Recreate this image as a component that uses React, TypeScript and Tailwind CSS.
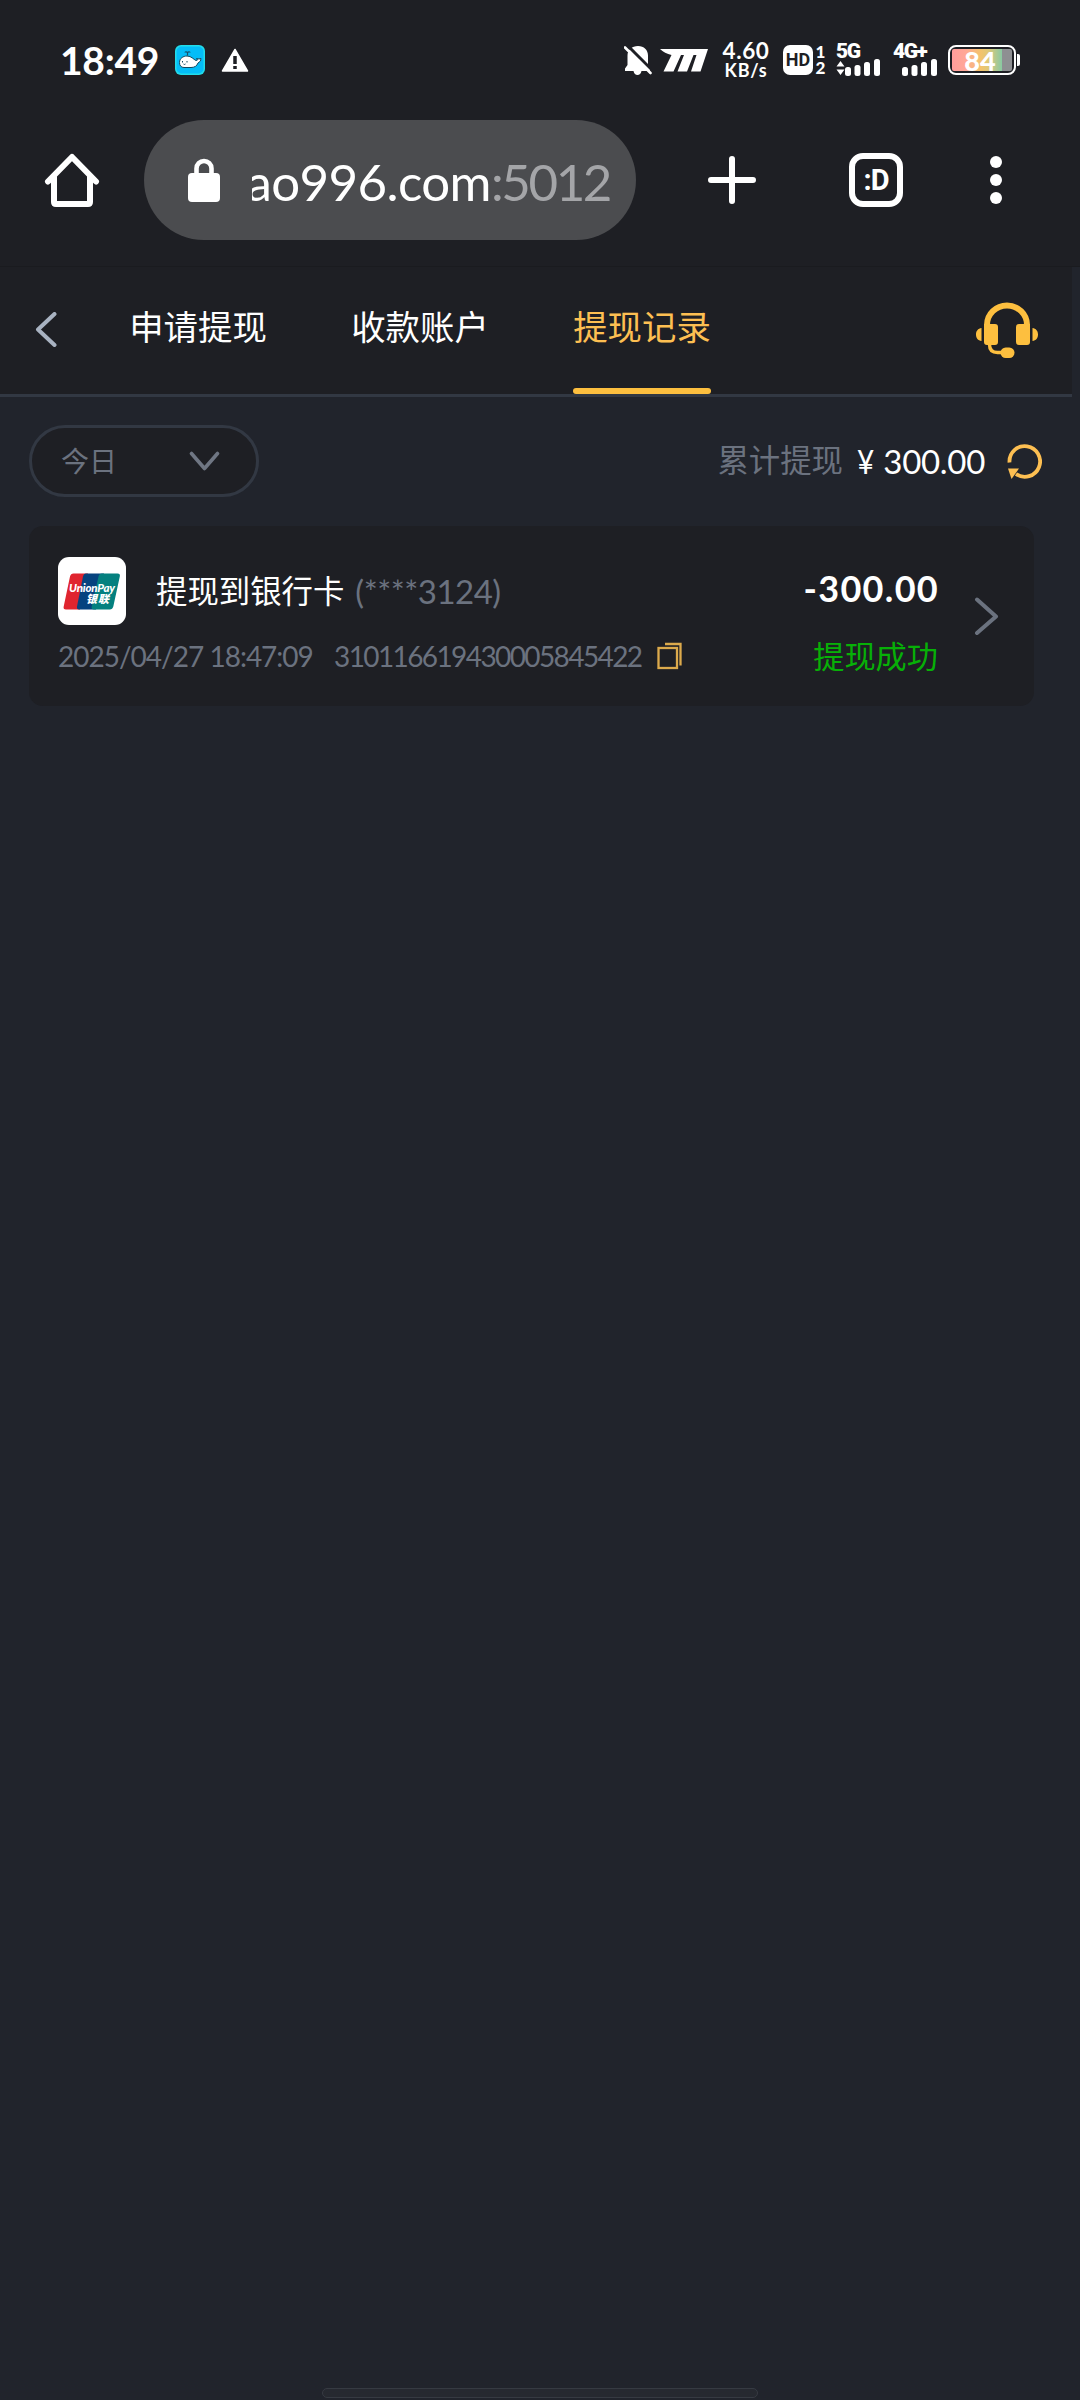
import type { ReactNode } from 'react'

const tabs = [
  { id: 'apply', label: '申请提现' },
  { id: 'account', label: '收款账户' },
  { id: 'records', label: '提现记录' },
]

const records = [
  {
    id: '310116619430005845422',
    title: '提现到银行卡',
    card: '(****3124)',
    time: '2025/04/27 18:47:09',
    amount: '-300.00',
    status: '提现成功',
  },
]

function Signal() {
  return (
    <svg width="35" height="17" viewBox="0 0 35 17" fill="#fff">
      <rect x="0" y="8" width="6" height="9" rx="2.5" />
      <rect x="9.5" y="6" width="6" height="11" rx="2.5" />
      <rect x="19" y="3" width="6" height="14" rx="2.5" />
      <rect x="29" y="0" width="6" height="17" rx="2.5" />
    </svg>
  )
}

function WhaleIcon() {
  return (
    <svg className="ml-[17px]" width="30" height="30" viewBox="0 0 30 30">
      <rect width="30" height="30" rx="6" fill="#22dcea" />
      <rect x="1.5" y="1.5" width="27" height="27" rx="5" fill="#04bdf8" />
      <path d="M12.5 10.5V8M10 7.5c0-1 2.5-1 2.5.5 0-1.5 2.5-1.5 2.5-.5" fill="none" stroke="#17506b" strokeWidth="1.2" />
      <path
        d="M4.5 17.5c0-4 3.5-6.500 7.500-6.500 4.500 0 6.500 3.500 9 4.500l1.500-.5-1-1.500 2.500.5 2-.5-.5 2.500-2.500 2c-1 3-3.500 4.500-7 4.500H9c-3 0-4.500-2-4.500-5z"
        fill="#fff"
        stroke="#12485f"
        strokeWidth="1"
      />
      <path d="M7.5 16v1.5M12 16v1.5M8.5 19c.6.6 1.4.6 2 0" fill="none" stroke="#12485f" strokeWidth="1" />
    </svg>
  )
}

function StatusBar() {
  return (
    <div className="flex h-[120px] items-center pl-[60px]">
      <span className="w-[100px] text-[39px] leading-none font-bold tracking-[-0.3px] whitespace-nowrap">18:49</span>
      <div className="-ml-[2px] flex items-center">
        <WhaleIcon />
        <svg className="ml-4" width="28" height="24" viewBox="0 0 28 24">
          <path d="M14 1.5 26.5 23H1.5z" fill="#fff" stroke="#fff" strokeWidth="1.5" strokeLinejoin="round" />
          <path d="M14 8v8M14 18v3" stroke="#1e1f24" strokeWidth="3.5" />
        </svg>
      </div>
      <div className="ml-auto flex w-[456px] items-center">
        <svg width="28" height="31" viewBox="0 0 28 31">
          <path
            d="M14 1c6 0 10 4 10 9.5V20l2 3.500V26h-8.500c-.5 2.500-2 4-4 4s-3.500-1.500-4-4H1v-2.500L3.500 20v-9.500C3.500 5 8 1 14 1z"
            fill="#fff"
          />
          <path d="M3 0 30 27" stroke="#1e1f24" strokeWidth="3" />
          <path d="M1 2.5 26.5 28" stroke="#fff" strokeWidth="2.6" strokeLinecap="round" />
        </svg>
        <svg className="ml-2" width="48" height="23" viewBox="0 0 48 23" fill="#fff">
          <path d="M0 0h48l-7.500 22.500H31L36.500 6h-3L27 22.500h-9.500L24 6h-3l-7.500 16.500H3.500L11.500 6C7 4.800 3 3 0 0z" />
        </svg>
        <div className="ml-[11px] flex w-[54px] flex-col items-center font-bold">
          <span className="text-[22.5px] leading-[20px] tracking-[0.6px]">4.60</span>
          <span className="text-[18px] leading-[18px] tracking-[0.8px]">KB/s</span>
        </div>
        <div className="ml-[10px] flex h-[30px] w-[30px] items-center justify-center rounded-[7px] bg-white">
          <span className="font-['Roboto'] text-[18px] leading-none font-bold text-[#1e1f24]">HD</span>
        </div>
        <div className="ml-[2px] flex w-[11px] flex-col items-center text-[17px] leading-[16px] font-black">
          <span>1</span>
          <span>2</span>
        </div>
        <div className="ml-[10px] flex h-[32px] w-[46px] flex-col">
          <span className="font-['Roboto'] text-[21px] leading-[15px] font-black tracking-[-1.5px]">5G</span>
          <div className="flex">
            <svg width="9" height="17" viewBox="0 0 9 17" fill="#fff">
              <path d="M4.5 2 8.500 7.500h-8zM4.500 16 .5 10.500h8z" />
            </svg>
            <Signal />
          </div>
        </div>
        <div className="ml-[11px] flex h-[32px] w-[46px] flex-col">
          <span className="font-['Roboto'] text-[21px] leading-[15px] font-black tracking-[-1.5px]">4G+</span>
          <div className="ml-[9px] flex">
            <Signal />
          </div>
        </div>
        <div className="ml-[9px] flex h-[30px] w-[68px] items-center rounded-[8px] border-2 border-white p-[2px]">
          <div className="flex h-[22px] w-full items-center justify-center rounded-[2px] bg-[linear-gradient(90deg,#ff9c9c_0%,#ffa797_22%,#f3c36c_48%,#dcc97a_62%,#8ac9a2_83%,#8e8f92_83%,#8e8f92_100%)]">
            <span className="-ml-1 text-[27px] leading-none font-black">84</span>
          </div>
        </div>
        <div className="ml-[1px] h-3 w-[3px] rounded-r-[2px] bg-white" />
      </div>
    </div>
  )
}

function BrowserBar() {
  return (
    <div className="flex h-[147px] items-start">
      <svg className="mt-[32px] ml-[44px]" width="56" height="56" viewBox="0 0 56 56" fill="none" stroke="#fff" strokeLinecap="round" strokeLinejoin="round">
        <path d="M4 29.5 28 5l24 24.5" strokeWidth="6" />
        <path d="M10 25v25q0 2 2 2h32q2 0 2-2V25" strokeWidth="6" />
      </svg>
      <div className="ml-[44px] flex h-[120px] w-[492px] items-center rounded-full bg-[#4b4c4f] pr-[26px] pl-[44px]">
        <svg width="32" height="44" viewBox="0 0 32 44">
          <rect y="15" width="32" height="29" rx="4" fill="#fff" />
          <path d="M8.500 17v-6.500a7.500 7.500 0 0 1 15 0V17" fill="none" stroke="#fff" strokeWidth="4.6" />
        </svg>
        {/* Host is right aligned, its head runs out of the field */}
        <div className="mt-[3px] ml-8 flex flex-1 justify-end overflow-hidden text-[51px] leading-[64px]">
          <span className="tracking-[-0.6px]">ao996.com</span>
          <span className="tracking-[-2.4px] text-[#a4a5a8]">:5012</span>
        </div>
      </div>
      <svg className="mt-[36px] ml-[72px]" width="48" height="48" viewBox="0 0 48 48" stroke="#fff" strokeWidth="6" strokeLinecap="round">
        <path d="M24 3v42M3 24h42" />
      </svg>
      <div className="mt-[33px] ml-[93px] flex h-[54px] w-[54px] items-center justify-center rounded-[14px] border-6 border-white">
        <span className="font-['Roboto'] text-[29px] leading-none font-bold tracking-[-1px]">:D</span>
      </div>
      <svg className="mt-[36px] ml-[87px]" width="12" height="48" viewBox="0 0 12 48" fill="#fff">
        <circle cx="6" cy="6" r="6" />
        <circle cx="6" cy="24" r="6" />
        <circle cx="6" cy="42" r="6" />
      </svg>
    </div>
  )
}

function Headset() {
  return (
    <svg className="mt-[35px] mr-[34px] ml-auto" width="62" height="56" viewBox="0 0 62 56" fill="#fdbf3f">
      <path d="M11 24v-1a20 19.500 0 0 1 40 0v1" fill="none" stroke="#fdbf3f" strokeWidth="6" />
      <path d="M8 22h11q3 0 3 3v15q0 3-3 3h-8q-3 0-3-3zM54 22H43q-3 0-3 3v15q0 3 3 3h8q3 0 3-3z" />
      <path d="M5.500 26v13C2 38.500 0 36 0 32.500S2 26.500 5.500 26zM56.500 26v13c3.500-.5 5.500-3 5.500-6.500s-2-6-5.500-6.500z" />
      <path d="M13.500 41v1.500q0 8 8 8H27" fill="none" stroke="#fdbf3f" strokeWidth="3.4" />
      <rect x="24.500" y="45.500" width="14" height="10.500" rx="5.2" />
    </svg>
  )
}

function NavTabs({ active }: { active: string }) {
  return (
    <div className="flex h-[130px] w-[1072px] items-start border-b-3 border-[#323843] bg-[#1e1f24]">
      <svg className="mt-[45px] ml-[35px]" width="22" height="35" viewBox="0 0 22 35" fill="none" stroke="#a9b3c2" strokeWidth="4" strokeLinecap="round" strokeLinejoin="round">
        <path d="M19.500 2 3 17.500 19.500 33" />
      </svg>
      <div className="ml-[72px] flex gap-[84px]">
        {tabs.map(tab => (
          <div
            key={tab.id}
            className={
              tab.id === active
                ? 'flex h-[127px] w-[138px] flex-col items-center justify-between text-[#fdbf52]'
                : 'flex h-[127px] w-[138px] flex-col items-center justify-between'
            }
          >
            <span className="mt-[36px] text-[34.4px] leading-[48px] whitespace-nowrap">{tab.label}</span>
            {tab.id === active && <div className="h-[6px] w-full rounded-full bg-[#fdbf3f]" />}
          </div>
        ))}
      </div>
      <Headset />
    </div>
  )
}

function FilterRow() {
  return (
    <div className="mt-7 flex h-[72px] w-[1072px] items-center pr-[30px] pl-[29px]">
      <div className="flex h-[72px] w-[230px] items-center justify-between rounded-full border-3 border-[#323843] bg-[#1e1f24] pr-[36px] pl-[29px]">
        <span className="text-[28px] leading-none text-[#6b727f]">今日</span>
        <svg width="31" height="20" viewBox="0 0 31 20" fill="none" stroke="#6f7683" strokeWidth="3.6" strokeLinecap="round" strokeLinejoin="round">
          <path d="M2.500 2.500 15.500 17.500 28.500 2.500" />
        </svg>
      </div>
      <span className="ml-auto text-[31.4px] leading-none text-[#6b727f]">累计提现</span>
      <div className="ml-[14px] flex w-[128px] items-center justify-between text-[33px] leading-none whitespace-nowrap">
        <span className="w-[18px] origin-left scale-x-90">¥</span>
        <span className="tracking-[-0.3px]">300.00</span>
      </div>
      <svg className="ml-[22px]" width="35" height="35" viewBox="0 0 35 35">
        <path d="M2.500 18.500a15.300 15.300 0 1 1 6.500 11.500" fill="none" stroke="#fdbf52" strokeWidth="3.8" />
        <path d="M1 24.500 12 24.500 4.500 35z" fill="#fdbf52" />
      </svg>
    </div>
  )
}

function UnionPayLogo() {
  return (
    <svg width="68" height="68" viewBox="0 0 68 68">
      <rect width="68" height="68" rx="11" fill="#fff" />
      <path d="M15.500 16.500H30l-8 36H8q-3 0-2.300-3l6.300-30q.8-3 3.500-3z" fill="#e0252f" />
      <path d="M28 16.500H46l-8 36H21q-2.500 0-2-3l6-30q.7-3 3-3z" fill="#06437f" />
      <path d="M44 16.500H59.500q3 0 2.300 3l-6.500 30q-.8 3-3.500 3H36q-3 0-2.300-3l6.800-30q.6-3 3.500-3z" fill="#04807f" />
      <text x="11" y="35" fill="#fff" fontSize="11.5" fontWeight="900" fontStyle="italic" textLength="46">
        UnionPay
      </text>
      <text x="28" y="45.5" fill="#fff" fontSize="11" fontWeight="900" fontStyle="italic" textLength="23">
        银联
      </text>
    </svg>
  )
}

function CopyIcon() {
  return (
    <svg width="25" height="28" viewBox="0 0 25 28" fill="none" stroke="#dcaa4c" strokeWidth="2.3">
      <rect x="1.500" y="6" width="18.500" height="20" />
      <path d="M8 2h15.500v21.500" />
    </svg>
  )
}

function Text({ className, children }: { className: string; children: ReactNode }) {
  return <span className={`block whitespace-nowrap ${className}`}>{children}</span>
}

function RecordCard({ record }: { record: (typeof records)[number] }) {
  return (
    <div className="mt-[29px] ml-[29px] flex h-[180px] w-[1005px] rounded-[14px] bg-[#1e1f24] pl-[29px]">
      <div className="w-[640px]">
        <div className="mt-[31px] flex h-[68px] items-center">
          <UnionPayLogo />
          <Text className="ml-[30px] text-[31.4px] leading-[40px]">{record.title}</Text>
          <Text className="ml-[11px] text-[33px] leading-[40px] tracking-[-0.5px] text-[#6b727f]">{record.card}</Text>
        </div>
        <div className="mt-[15px] flex h-8 items-center text-[28px] leading-8 text-[#6b727f]">
          <Text className="w-[276px] tracking-[-1px]">{record.time}</Text>
          <Text className="w-[323px] tracking-[-1.6px]">{record.id}</Text>
          <CopyIcon />
        </div>
      </div>
      <div className="flex w-[241px] flex-col items-end">
        <Text className="mt-[42px] text-[36px] leading-[40px] font-bold tracking-[1.3px]">{record.amount}</Text>
        <Text className="mt-[28px] mr-px text-[31.2px] leading-[40px] text-[#07b007]">{record.status}</Text>
      </div>
      <svg className="mt-[71px] ml-[35px]" width="26" height="38" viewBox="0 0 26 38" fill="none" stroke="#6b727f" strokeWidth="4" strokeLinecap="round" strokeLinejoin="round">
        <path d="M3 2.500 22 19.500 3 36" />
      </svg>
    </div>
  )
}

export default function App() {
  return (
    <div className="flex h-[2400px] w-[1080px] flex-col overflow-hidden bg-[#21242c] font-['Lato','Noto_Sans_CJK_SC',sans-serif] text-white">
      <div className="h-[267px] border-b border-[#1a1b1f] bg-[#1e1f24]">
        <StatusBar />
        <BrowserBar />
      </div>
      <NavTabs active="records" />
      <FilterRow />
      {records.map(record => (
        <RecordCard key={record.id} record={record} />
      ))}
      {/* Gesture bar */}
      <div className="mx-auto mt-auto mb-[2px] h-[10px] w-[436px] rounded-full border border-[#363a42] bg-[#262930]" />
    </div>
  )
}
